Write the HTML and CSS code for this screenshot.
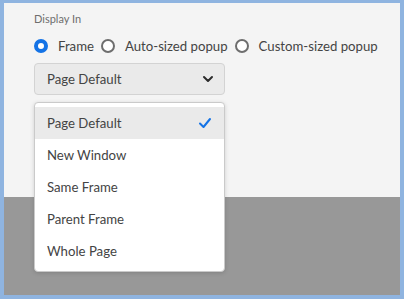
FILE: index.html
```html
<!DOCTYPE html>
<html lang="en">
<head>
    <meta charset="UTF-8">
    <meta name="viewport" content="width=device-width, initial-scale=1.0">
    <title>Display In</title>
    <link rel="stylesheet" href="styles.css">
</head>
<body>
    <div class="frame">
        <div class="panel">
            <div class="field-label">Display In</div>

            <div class="radio-group">
                <label class="radio checked"><span class="radio-dot"></span>Frame</label>
                <label class="radio"><span class="radio-dot"></span>Auto-sized popup</label>
                <label class="radio"><span class="radio-dot"></span>Custom-sized popup</label>
            </div>

            <div class="picker">
                <span>Page Default</span>
                <svg class="chevron" width="12" height="8" viewBox="0 0 12 8">
                    <path d="M2 2 L6 6 L10 2" fill="none" stroke="#2c2c2c" stroke-width="2" stroke-linecap="round" stroke-linejoin="round"/>
                </svg>
            </div>
        </div>

        <div class="shade"></div>

        <ul class="popover">
            <li class="item selected">
                Page Default
                <svg class="check" width="14" height="12" viewBox="0 0 14 12">
                    <path d="M2 6.5 L5.5 10 L12 2" fill="none" stroke="#1473e6" stroke-width="2" stroke-linecap="round" stroke-linejoin="round"/>
                </svg>
            </li>
            <li class="item">New Window</li>
            <li class="item">Same Frame</li>
            <li class="item">Parent Frame</li>
            <li class="item">Whole Page</li>
        </ul>
    </div>
</body>
</html>
```

FILE: styles.css
```css
body {
    margin: 0;
    font-family: 'Lato', 'Noto Sans', sans-serif;
    color: #4b4b4b;
}

.frame {
    position: relative;
    height: 299px;
    box-sizing: border-box;
    border: 4px solid #8fb4e0;
    border-top-width: 3px;
    display: flex;
    flex-direction: column;
}

.panel {
    height: 194px;
    background-color: #f4f4f4;
    padding: 9px 30px 0;
    box-sizing: border-box;
}

.shade {
    flex: 1;
    background-color: #989898;
}

.field-label {
    font-size: 11px;
    color: #6e6e6e;
    line-height: 14px;
}

.radio-group {
    display: flex;
    align-items: center;
    margin-top: 8px;
    height: 24px;
    white-space: nowrap;
}

.radio {
    display: flex;
    align-items: center;
    font-size: 13.2px;
    color: #444;
    margin-right: 7px;
    flex-shrink: 0;
}

.radio-dot {
    width: 14px;
    height: 14px;
    box-sizing: border-box;
    border: 2px solid #6e6e6e;
    border-radius: 50%;
    background-color: #fff;
    margin-right: 10px;
}

.radio.checked .radio-dot {
    border: 4px solid #1473e6;
}

.picker {
    margin-top: 5px;
    width: 191px;
    height: 32px;
    box-sizing: border-box;
    background-color: #eaeaea;
    border: 1px solid #d3d3d3;
    border-radius: 4px;
    display: flex;
    align-items: center;
    justify-content: space-between;
    padding: 0 10px 0 12px;
    font-size: 13.2px;
    color: #444;
}

.popover {
    position: absolute;
    left: 30px;
    top: 99px;
    width: 191px;
    box-sizing: border-box;
    margin: 0;
    padding: 4px 0;
    list-style: none;
    background-color: #fff;
    border: 1px solid #cacaca;
    border-radius: 4px;
    box-shadow: 0 1px 4px rgba(0, 0, 0, 0.15);
}

.item {
    height: 32px;
    display: flex;
    align-items: center;
    justify-content: space-between;
    padding: 0 12px;
    font-size: 13.2px;
    color: #444;
}

.item.selected {
    background-color: #eaeaea;
}
```
